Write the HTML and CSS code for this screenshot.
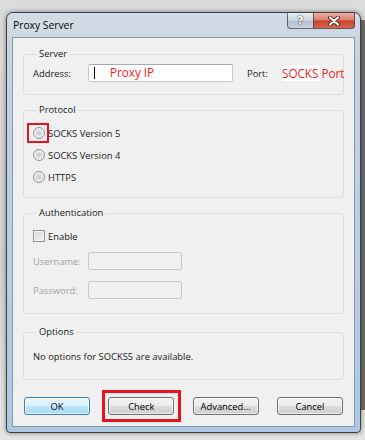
FILE: index.html
```html
<!DOCTYPE html>
<html lang="en">

<head>
    <meta charset="UTF-8">
    <meta name="viewport" content="width=device-width, initial-scale=1.0">
    <title>Proxy Server</title>
    <link rel="stylesheet" href="styles.css">
</head>

<body>
    <div class="window">
        <!-- Title bar -->
        <div class="titlebar">
            <span class="title">Proxy Server</span>
            <div class="caption-buttons">
                <div class="cap-btn cap-help">?</div>
                <div class="cap-btn cap-close">
                    <svg width="14" height="10" viewBox="0 0 14 10">
                        <path d="M3 1.5 L11 8.5 M11 1.5 L3 8.5" stroke="#5a2a22" stroke-width="4" stroke-linecap="round" />
                        <path d="M3 1.5 L11 8.5 M11 1.5 L3 8.5" stroke="#fff" stroke-width="2.2" stroke-linecap="round" />
                    </svg>
                </div>
            </div>
        </div>

        <div class="client">
            <!-- Server -->
            <fieldset class="group group-server">
                <legend>Server</legend>
                <div class="server-row">
                    <label class="field-label address-label">Address:</label>
                    <div class="textbox address-box">
                        <span class="caret"></span>
                        <span class="note note-ip">Proxy IP</span>
                    </div>
                    <label class="field-label port-label">Port:</label>
                    <div class="textbox port-box">
                        <span class="note note-port">SOCKS Port</span>
                    </div>
                </div>
            </fieldset>

            <!-- Protocol -->
            <fieldset class="group group-protocol">
                <legend>Protocol</legend>
                <div class="option-row">
                    <span class="radio"><span class="mark mark-radio"></span></span>
                    <span>SOCKS Version 5</span>
                </div>
                <div class="option-row">
                    <span class="radio"></span>
                    <span>SOCKS Version 4</span>
                </div>
                <div class="option-row">
                    <span class="radio"></span>
                    <span>HTTPS</span>
                </div>
            </fieldset>

            <!-- Authentication -->
            <fieldset class="group group-auth">
                <legend>Authentication</legend>
                <div class="check-row">
                    <span class="checkbox"></span>
                    <span>Enable</span>
                </div>
                <div class="auth-row auth-user">
                    <label class="field-label disabled">Username:</label>
                    <div class="textbox disabled-box"></div>
                </div>
                <div class="auth-row auth-pass">
                    <label class="field-label disabled">Password:</label>
                    <div class="textbox disabled-box"></div>
                </div>
            </fieldset>

            <!-- Options -->
            <fieldset class="group group-options">
                <legend>Options</legend>
                <div class="options-text">No options for SOCKS5 are available.</div>
            </fieldset>

            <div class="buttons">
                <button class="btn btn-default">OK</button>
                <button class="btn btn-check">Check<span class="mark mark-check"></span></button>
                <button class="btn">Advanced...</button>
                <button class="btn">Cancel</button>
            </div>
        </div>
    </div>
</body>

</html>
```

FILE: styles.css
```css
body {
    margin: 0;
    padding: 12px 4px 0 6px;
    height: 440px;
    box-sizing: border-box;
    overflow: hidden;
    font-family: "Open Sans", "Noto Sans", sans-serif;
    font-size: 9.4px;
    color: #1a1a1a;
    background:
        linear-gradient(to right, transparent 361px, #6e6e6e 361px) 0 20px / 100% 390px no-repeat,
        linear-gradient(#dcdcdc, #d2d2d2 60%, #e6e6e6);
}

.window {
    width: 355px;
    height: 421px;
    box-sizing: border-box;
    border: 1px solid #3d3f44;
    border-radius: 7px 7px 4px 4px;
    padding: 0 5px 5px 5px;
    background: linear-gradient(to bottom, #d3dce5 0, #c6d3e0 40px, #b8cee4 60%, #aec8e2 100%);
    box-shadow: 0 0 5px rgba(0, 0, 0, 0.45);
}

/* Title bar */
.titlebar {
    height: 24px;
    display: flex;
    justify-content: space-between;
    align-items: flex-start;
}

.title {
    margin: 5px 0 0 1px;
    font-size: 10.3px;
    line-height: 14px;
    color: #000;
    text-shadow: 0 0 6px rgba(255, 255, 255, 0.9);
}

.caption-buttons {
    display: flex;
}

.cap-btn {
    height: 16px;
    box-sizing: border-box;
    border: 1px solid rgba(55, 62, 72, 0.75);
    border-top: none;
    display: flex;
    justify-content: center;
    align-items: center;
}

.cap-help {
    width: 26px;
    border-right: none;
    border-radius: 0 0 0 4px;
    background: linear-gradient(#e7ecf1, #cbd4de 50%, #b3bfcc 51%, #c9d3dd);
    color: #fff;
    font-family: "DejaVu Sans", sans-serif;
    font-weight: bold;
    font-size: 11px;
    text-shadow: 0 0 1px #444, 0 0 2px #444;
}

.cap-close {
    width: 42px;
    border-radius: 0 0 4px 0;
    background: linear-gradient(#eeb2a5, #dc7d6a 48%, #c8412c 52%, #d9654c);
}

/* Client area */
.client {
    height: 390px;
    box-sizing: border-box;
    border: 1px solid #8797a9;
    background: #f0f0f0;
    padding-top: 10px;
}

.group {
    margin: 0 10px;
    border: 1px solid #d9dfe5;
    border-radius: 3px;
    padding: 0 9px;
    min-width: 0;
}

.group legend {
    margin-left: 4px;
    padding: 0 2px;
    line-height: 12px;
    color: #1a1a1a;
}

.group-server {
    padding-top: 3px;
    padding-bottom: 11px;
}

.server-row {
    display: flex;
    align-items: center;
    height: 20px;
}

.field-label {
    flex-shrink: 0;
}

.address-label {
    width: 55px;
}

.port-label {
    width: 34px;
    margin-left: 14px;
}

.textbox {
    position: relative;
    height: 18px;
    box-sizing: border-box;
    background: #fff;
    border: 1px solid #c2c9d3;
    border-top-color: #a5aab4;
    border-radius: 2px;
}

.address-box {
    width: 145px;
}

.port-box {
    width: 40px;
    border-color: #eceef1;
}

.caret {
    position: absolute;
    left: 5px;
    top: 2px;
    width: 1px;
    height: 12px;
    background: #000;
}

.note {
    position: absolute;
    color: #f01c20;
    font-size: 11.7px;
    line-height: 14px;
    white-space: nowrap;
}

.note-ip {
    left: 21px;
    top: 0;
}

.note-port {
    left: 0;
    top: 1px;
}

.group-protocol {
    margin-top: 9px;
    padding-top: 6px;
    padding-bottom: 9px;
}

.option-row,
.check-row {
    display: flex;
    align-items: center;
    height: 22px;
}

.radio {
    position: relative;
    width: 12px;
    height: 12px;
    box-sizing: border-box;
    margin-right: 3px;
    border-radius: 50%;
    border: 1px solid #8f9193;
    background: radial-gradient(circle, #c9cbcd 0, #dfe0e1 3px, #f7f7f7 5px);
}

.mark {
    position: absolute;
    border: 2px solid #e8141b;
}

.mark-radio {
    left: -7px;
    top: -5px;
    width: 18px;
    height: 16px;
}

.group-auth {
    margin-top: 9px;
    padding-top: 7px;
    padding-bottom: 14px;
}

.check-row {
    height: 20px;
}

.checkbox {
    width: 12px;
    height: 12px;
    box-sizing: border-box;
    margin-right: 3px;
    border: 1px solid #8f9193;
    background: linear-gradient(135deg, #d2d4d6, #f6f6f6);
    box-shadow: inset 0 0 0 1px #f4f4f4;
}

.auth-row {
    display: flex;
    align-items: center;
}

.auth-row .field-label {
    width: 55px;
}

.auth-user {
    margin-top: 6px;
}

.auth-pass {
    margin-top: 11px;
}

.disabled {
    color: #a3a3a3;
}

.disabled-box {
    width: 94px;
    background: #f0f0f0;
    border: 1px solid #c9c9c9;
}

.group-options {
    margin-top: 12px;
    padding-top: 12px;
    padding-bottom: 15px;
}

.options-text {
    line-height: 14px;
}

/* Dialog buttons */
.buttons {
    display: flex;
    justify-content: space-between;
    margin: 17px 11px 0 11px;
}

.btn {
    position: relative;
    width: 66px;
    height: 18px;
    padding: 0;
    font-family: inherit;
    font-size: 9.4px;
    color: #000;
    border: 1px solid #707070;
    border-radius: 3px;
    background: linear-gradient(#f2f2f2, #ebebeb 50%, #dddddd 51%, #cfcfcf);
    box-shadow: inset 0 0 0 1px rgba(255, 255, 255, 0.6);
}

.btn-default {
    border-color: #3c7fb1;
    background: linear-gradient(#eaf6fd, #d9f0fc 50%, #bee6fd 51%, #a7d9f5);
    box-shadow: inset 0 0 0 1px rgba(255, 255, 255, 0.7);
}

.mark-check {
    left: -7px;
    top: -8px;
    width: 73px;
    height: 26px;
    border-width: 3px;
}
```
